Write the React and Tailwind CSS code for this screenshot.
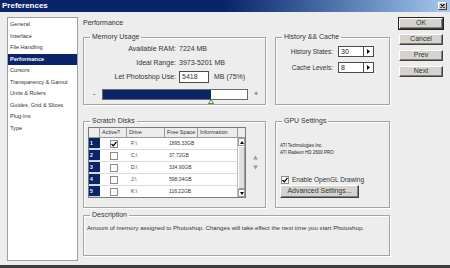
import React from 'react';

const listItems = [
  'General',
  'Interface',
  'File Handling',
  'Performance',
  'Cursors',
  'Transparency & Gamut',
  'Units & Rulers',
  'Guides, Grid & Slices',
  'Plug-Ins',
  'Type',
];

const disks = [
  { n: 1, active: true, drive: 'F:\\', free: '1895.33GB' },
  { n: 2, active: false, drive: 'C:\\', free: '37.72GB' },
  { n: 3, active: false, drive: 'D:\\', free: '334.90GB' },
  { n: 4, active: false, drive: 'J:\\', free: '598.04GB' },
  { n: 5, active: false, drive: 'K:\\', free: '116.22GB' },
];

const Group = ({ title, className = '', children }) => (
  <fieldset className={`border border-[#a3a3a3] shadow-[inset_1px_1px_0_#fff,1px_1px_0_#fff] ${className}`}>
    <legend className="ml-[6px] px-[2px] text-[7px] leading-[8px] text-[#333]">{title}</legend>
    {children}
  </fieldset>
);

const Button = ({ children, className = '' }) => (
  <div
    className={`flex items-center justify-center bg-[#d6d3ce] border border-t-white border-l-white border-r-[#404040] border-b-[#404040] shadow-[inset_-1px_-1px_0_#808080] text-[7px] text-[#333] ${className}`}
  >
    {children}
  </div>
);

const Check = ({ checked }) => (
  <div className="w-[8px] h-[8px] bg-white border border-[#8c8c8c] flex items-center justify-center">
    {checked && (
      <svg width="6" height="6" viewBox="0 0 6 6">
        <path d="M0.5 3 L2.3 4.8 L5.5 0.8" stroke="#000" strokeWidth="1.3" fill="none" />
      </svg>
    )}
  </div>
);

const Spinner = ({ value }) => (
  <div className="flex w-[36px] h-[11px] bg-white border border-[#4a4a4a]">
    <div className="flex-1 pl-[2px] text-[7px] leading-[9px] text-[#222]">{value}</div>
    <div className="w-[10px] border-l border-[#4a4a4a] flex items-center justify-center">
      <svg width="3" height="5" viewBox="0 0 3 5">
        <path d="M0 0 L3 2.5 L0 5 Z" fill="#000" />
      </svg>
    </div>
  </div>
);

export default function App() {
  return (
    <div className="w-[450px] h-[268px] overflow-hidden flex flex-col bg-[#ededed] border-b-[3px] border-[#3c3c3c] font-['Liberation_Sans',Arial,sans-serif]">
      {/* title bar */}
      <div className="h-[12px] shrink-0 flex items-center justify-between bg-linear-to-r from-[#0a246a] via-[#0a246a] to-[#a6caf0] px-[2px]">
        <span className="text-[8px] font-bold text-white leading-none">Preferences</span>
        <div className="w-[9px] h-[8px] mr-[1px] bg-[#d4d0c8] border border-t-white border-l-white border-r-[#404040] border-b-[#404040] flex items-center justify-center">
          <svg width="5" height="4" viewBox="0 0 5 4">
            <path d="M0.5 0 L4.5 4 M4.5 0 L0.5 4" stroke="#000" strokeWidth="1.1" />
          </svg>
        </div>
      </div>

      <div className="flex flex-1 pl-[7px] pt-[5px]">
        {/* category list */}
        <div className="w-[71px] h-[244px] bg-white border border-[#a0a0a0] pt-[1px]">
          {listItems.map((item) => (
            <div
              key={item}
              className={`h-[11.5px] pl-[2px] text-[5.6px] leading-[11.5px] whitespace-nowrap ${
                item === 'Performance' ? 'bg-[#0a246a] text-white font-bold' : 'text-[#333]'
              }`}
            >
              {item}
            </div>
          ))}
        </div>

        {/* main panel */}
        <div className="w-[307px] ml-[5px] flex flex-col">
          <div className="h-[11px] text-[7px] leading-[11px] text-[#333]">Performance</div>

          <div className="flex gap-[9px] mt-[5px]">
            <Group title="Memory Usage" className="w-[183px] h-[72px]">
              <div className="grid grid-cols-[92px_1fr] gap-x-[3px] text-[7px] text-[#333] mt-[1px]">
                <div className="h-[13px] leading-[13px] text-right">Available RAM:</div>
                <div className="h-[13px] leading-[13px]">7224 MB</div>
                <div className="h-[15px] leading-[15px] text-right">Ideal Range:</div>
                <div className="h-[15px] leading-[15px]">3973-5201 MB</div>
                <div className="h-[14px] leading-[14px] text-right">Let Photoshop Use:</div>
                <div className="h-[14px] flex items-center gap-[5px]">
                  <div className="w-[30px] h-[12px] bg-white border border-[#4a4a4a] pl-[2px] leading-[10px]">5418</div>
                  <span>MB (75%)</span>
                </div>
              </div>
              <div className="flex items-center mt-[5px] pl-[9px] text-[7px] text-[#333]">
                <span className="w-[9px]">-</span>
                <div className="relative w-[146px] h-[11px] bg-white border border-[#6a6a6a]">
                  <div className="w-[108px] h-full bg-[#0b2566]" />
                  <svg className="absolute left-[105px] top-[9px]" width="6" height="5" viewBox="0 0 6 5">
                    <path d="M3 0.5 L5.5 4.5 L0.5 4.5 Z" fill="#fff" stroke="#4d8a3a" strokeWidth="1" />
                  </svg>
                </div>
                <span className="ml-[6px]">+</span>
              </div>
            </Group>

            <Group title="History && Cache" className="w-[115px] h-[72px]">
              <div className="grid grid-cols-[57px_1fr] gap-x-[5px] gap-y-[5px] items-center text-[6.5px] text-[#333] mt-[5px]">
                <div className="text-right">History States:</div>
                <Spinner value="30" />
                <div className="text-right">Cache Levels:</div>
                <Spinner value="8" />
              </div>
            </Group>
          </div>

          <div className="flex gap-[9px] mt-[12px]">
            <Group title="Scratch Disks" className="w-[183px] h-[91px]">
              <div className="flex items-center mt-[2px] ml-[4px]">
                <div className="w-[158px] h-[71px] border border-[#7a7a7a] bg-white flex flex-col overflow-hidden">
                  <div className="flex h-[10px] shrink-0 bg-[#ececec] border-b border-[#9a9a9a] text-[5.5px] leading-[9px] text-[#333]">
                    <div className="w-[11px] border-r border-[#9a9a9a]" />
                    <div className="w-[27px] border-r border-[#9a9a9a] pl-[2px]">Active?</div>
                    <div className="w-[38px] border-r border-[#9a9a9a] pl-[2px]">Drive</div>
                    <div className="w-[33px] border-r border-[#9a9a9a] pl-[2px]">Free Space</div>
                    <div className="w-[40px] border-r border-[#9a9a9a] pl-[2px]">Information</div>
                  </div>
                  <div className="flex flex-1 overflow-hidden">
                    <div className="flex-1 overflow-hidden">
                      {disks.map((d) => (
                        <div key={d.n} className="flex h-[12px] shrink-0 border-b border-[#dcdcdc] text-[5px] text-[#333]">
                          <div className="w-[11px] bg-[#0a246a] border-b border-[#d0d4e0] text-white font-bold pl-[1px] leading-[11px]">{d.n}</div>
                          <div className="w-[27px] flex items-center justify-center">
                            <Check checked={d.active} />
                          </div>
                          <div className="w-[38px] pl-[4px] leading-[11px]">{d.drive}</div>
                          <div className="w-[33px] pl-[4px] leading-[11px]">{d.free}</div>
                        </div>
                      ))}
                    </div>
                    <div className="w-[8px] flex flex-col border-l border-[#bdbdbd] bg-[#e4e4e4]">
                      <div className="h-[8px] bg-white border border-[#9a9a9a] flex items-center justify-center">
                        <svg width="4" height="3" viewBox="0 0 4 3"><path d="M2 0 L4 3 L0 3 Z" fill="#000" /></svg>
                      </div>
                      <div className="flex-1 bg-[#e0e0e0] border border-t-white border-l-white border-r-[#9a9a9a] border-b-[#9a9a9a]" />
                      <div className="h-[8px] bg-white border border-[#9a9a9a] flex items-center justify-center">
                        <svg width="4" height="3" viewBox="0 0 4 3"><path d="M0 0 L4 0 L2 3 Z" fill="#000" /></svg>
                      </div>
                    </div>
                  </div>
                </div>
                <div className="ml-[7px] flex flex-col gap-[5px]">
                  <svg width="5" height="5" viewBox="0 0 5 5"><path d="M2.5 0.5 L5 4.5 L0 4.5 Z" fill="#9a9a9a" /></svg>
                  <svg width="5" height="5" viewBox="0 0 5 5"><path d="M0 0.5 L5 0.5 L2.5 4.5 Z" fill="#9a9a9a" /></svg>
                </div>
              </div>
            </Group>

            <Group title="GPU Settings" className="w-[115px] h-[91px]">
              <div className="ml-[4px] mt-[17px] text-[4.5px] leading-[7px] text-[#222]">
                <div>ATI Technologies Inc.</div>
                <div>ATI Radeon HD 2600 PRO</div>
              </div>
              <div className="ml-[5px] mt-[19px] flex items-center gap-[3px] text-[6.5px] text-[#333] h-[9px]">
                <Check checked />
                <span>Enable OpenGL Drawing</span>
              </div>
              <Button className="ml-[4px] mt-[1px] w-[79px] h-[13px]">Advanced Settings...</Button>
            </Group>
          </div>

          <Group title="Description" className="w-[307px] h-[45px] mt-[3px]">
            <div className="pl-[3px] mt-[4px] text-[6.1px] text-[#333] whitespace-nowrap">
              Amount of memory assigned to Photoshop. Changes will take effect the next time you start Photoshop.
            </div>
          </Group>
        </div>

        {/* dialog buttons */}
        <div className="ml-[9px] mt-[1px] flex flex-col gap-[5px]">
          <Button className="w-[44px] h-[11px] outline outline-1 outline-[#222]">OK</Button>
          <Button className="w-[44px] h-[11px]">Cancel</Button>
          <Button className="w-[44px] h-[11px]">Prev</Button>
          <Button className="w-[44px] h-[11px]">Next</Button>
        </div>
      </div>
    </div>
  );
}
